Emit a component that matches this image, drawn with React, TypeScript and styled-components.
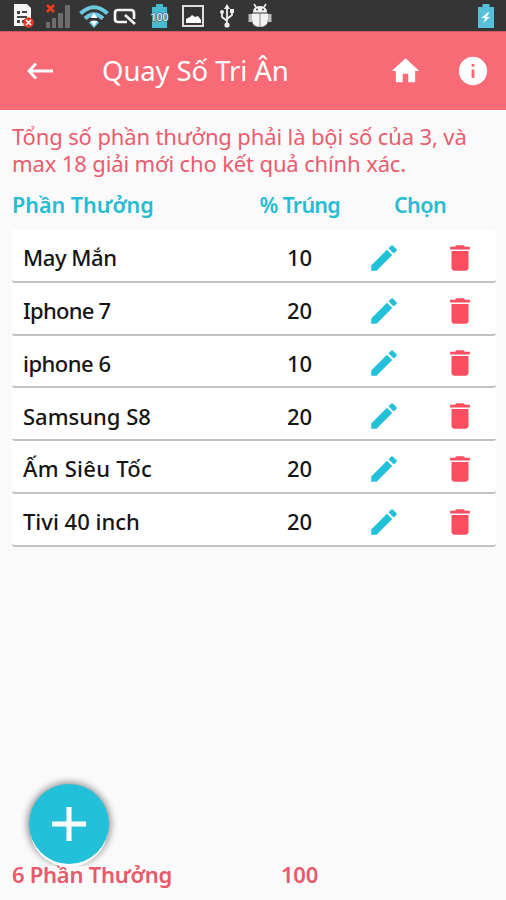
import React from "react";
import styled, { createGlobalStyle } from "styled-components";

const colors = {
  coral: "#f96a77",
  red: "#e8596a",
  notice: "#ea5c6e",
  trash: "#fb4f61",
  cyan: "#22c0d9",
  heading: "#27bcd2",
  page: "#fafafa",
  status: "#353535",
};

const GlobalStyle = createGlobalStyle`
  * { box-sizing: border-box; }
  body {
    margin: 0;
    background: ${colors.page};
    font-family: "Noto Sans", "Open Sans", sans-serif;
  }
`;

const Screen = styled.div`
  width: 506px;
  height: 900px;
  display: flex;
  flex-direction: column;
  overflow: hidden;
  background: ${colors.page};
`;

const StatusBar = styled.div`
  height: 31px;
  flex: none;
  display: flex;
  align-items: center;
  padding: 1px 11px 0 13px;
  background: ${colors.status};
`;

const StatusIcon = styled.svg<{ $gap?: number }>`
  display: block;
  flex: none;
  margin-right: ${(p) => p.$gap ?? 0}px;
`;

const Spacer = styled.div`
  flex: 1;
`;

const AppBar = styled.header`
  height: 79px;
  flex: none;
  display: flex;
  align-items: center;
  padding: 0 16px 0 26px;
  background: ${colors.coral};
  border-top: 1px solid #cf5a66;
`;

const Title = styled.h1`
  flex: 1;
  margin: 0 0 0 48px;
  color: #fff;
  font-size: 27.5px;
  font-weight: 400;
  line-height: 40px;
  letter-spacing: -0.1px;
  white-space: nowrap;
`;

const BarIcon = styled.svg<{ $left?: number }>`
  display: block;
  flex: none;
  margin-left: ${(p) => p.$left ?? 0}px;
  fill: #fff;
`;

const Notice = styled.p`
  margin: 13px 0 0 12px;
  color: ${colors.notice};
  font-size: 22px;
  line-height: 26.5px;
`;

const NoticeLine = styled.span`
  display: block;
  white-space: nowrap;
  letter-spacing: -0.13px;
`;

const HeadRow = styled.div`
  display: grid;
  grid-template-columns: 247.5px 134.5px 1fr;
  height: 30px;
  margin: 14px 0 10px 12px;
  color: ${colors.heading};
  font-size: 21.5px;
  font-weight: 600;
  line-height: 30px;
  white-space: nowrap;
`;

const HeadCell = styled.span<{ $spacing: number }>`
  letter-spacing: ${(p) => p.$spacing}px;
`;

const List = styled.div`
  width: 484px;
  margin-left: 12px;
`;

const PrizeRow = styled.div`
  display: grid;
  grid-template-columns: 248px 80px 76px 1fr;
  align-items: center;
  height: 52.75px;
  padding: 0 0 0 11px;
  background: #fff;
  border-bottom: 2.5px solid #c2c2c2;
  border-radius: 3px;
`;

const PrizeName = styled.span<{ $spacing: number }>`
  color: #151515;
  font-size: 22px;
  font-weight: 500;
  line-height: 30px;
  padding-top: 4px;
  white-space: nowrap;
  letter-spacing: ${(p) => p.$spacing}px;
`;

const Percent = styled.span`
  color: #151515;
  width: 57px;
  text-align: center;
  font-size: 22px;
  font-weight: 550;
  line-height: 30px;
  padding-top: 4px;
`;

const ActionIcon = styled.svg<{ $color: string }>`
  display: block;
  margin: 5px 0 0 16px;
  fill: ${(p) => p.$color};
`;

const Footer = styled.footer`
  display: grid;
  grid-template-columns: 269px 1fr;
  position: relative;
  margin: auto 0 11px 12px;
  color: ${colors.red};
  font-size: 22px;
  font-weight: 600;
  line-height: 30px;
  white-space: nowrap;
`;

const FooterText = styled.span`
  position: relative;
  z-index: 1;
  letter-spacing: -0.25px;
`;

const AddButton = styled.button`
  position: absolute;
  left: 17px;
  bottom: 25px;
  width: 80px;
  height: 80px;
  padding: 0;
  border: 0;
  border-radius: 50%;
  display: grid;
  place-items: center;
  background: ${colors.cyan};
  box-shadow: 0 4px 0 -1px #fff, 0 0 7px 2px rgba(0, 0, 0, 0.42);
  clip-path: inset(-16px -16px -2px -16px);
`;

const prizes = [
  { name: "May Mắn", percent: 10, spacing: -0.45 },
  { name: "Iphone 7", percent: 20, spacing: -0.75 },
  { name: "iphone 6", percent: 10, spacing: -0.5 },
  { name: "Samsung S8", percent: 20, spacing: 0 },
  { name: "Ấm Siêu Tốc", percent: 20, spacing: 0.25 },
  { name: "Tivi 40 inch", percent: 20, spacing: 0 },
];

function StatusIcons() {
  return (
    <StatusBar>
      <StatusIcon $gap={11} width="22" height="26" viewBox="0 0 22 26">
        <path d="M1 1h13l4 4v18H1z" fill="#f5f5f5" />
        <path d="M4 8h3v3H4zM9 8h5v2H9zM4 13h10v2H4zM4 17h3v3H4zM9 17h3v3H9z" fill="#444" />
        <circle cx="15.500" cy="19.500" r="5.300" fill="#e13b27" />
        <path d="M13 17l5 5m0-5l-5 5" stroke="#fff" strokeWidth="1.600" />
      </StatusIcon>
      <StatusIcon $gap={8} width="25" height="26" viewBox="0 0 25 26">
        <path d="M0 19h4v6H0zM6 15h4v10H6zM12 10h5v15h-5zM19 2h5v23h-5z" fill="#6c6c6c" />
        <path d="M1 2l7 7m0-7l-7 7" stroke="#ee3d1d" strokeWidth="2.600" />
      </StatusIcon>
      <StatusIcon $gap={4} width="30" height="26" viewBox="0 0 30 26">
        <path d="M1.500 10.500Q15-2 28.500 10.500M6 15.500q9-8.500 18 0" fill="none" stroke="#6bc8df" strokeWidth="4" />
        <path d="M10 19.500q5-4.500 10 0L15 25z" fill="#6bc8df" />
        <path d="M15 10l3.500 5h-7zM15 23l-3.500-5h7z" fill="#fff" />
      </StatusIcon>
      <StatusIcon $gap={13} width="24" height="26" viewBox="0 0 24 26">
        <path d="M14 20H5q-3 0-3-3v-6q0-3 3-3h13q3 0 3 3v6M12 13l10 9" transform="translate(0 -1)" fill="none" stroke="#f4f4f4" strokeWidth="2.700" />
      </StatusIcon>
      <StatusIcon $gap={13} width="19" height="26" viewBox="0 0 19 26">
        <path d="M6 1h7v3h4v21H2V4h4z" fill="#49b9d0" />
        <text x="9.500" y="17.500" textAnchor="middle" fontFamily="Roboto" fontSize="10.500" fontWeight="500" fill="#eef" stroke="#28616d" strokeWidth="1.200" paintOrder="stroke">100</text>
      </StatusIcon>
      <StatusIcon $gap={16} width="22" height="26" viewBox="0 0 22 26">
        <rect x="1" y="3" width="20" height="20" fill="none" stroke="#ddd" strokeWidth="2" />
        <path d="M4 20v-4l4-2 2-2 3 2 3-1 3 4v3z" fill="#fff" />
      </StatusIcon>
      <StatusIcon $gap={14} width="14" height="26" viewBox="0 0 14 26">
        <path d="M7 4v17M7 18l-5-4V8M7 16l5-4V8" fill="none" stroke="#eee" strokeWidth="1.800" />
        <path d="M7 1l3 5H4zM10 6h4v4h-4z" fill="#eee" />
        <circle cx="2" cy="9" r="2" fill="#eee" />
        <circle cx="7" cy="22" r="2.600" fill="#eee" />
      </StatusIcon>
      <StatusIcon width="24" height="26" viewBox="0 0 24 26">
        <path d="M5 9.500q0-6.500 7-6.500t7 6.500z" fill="#f2f2f2" />
        <path d="M8 4L6 1M16 4l2-3" stroke="#f2f2f2" strokeWidth="1.600" />
        <path d="M4 10.500h16V16q0 8-8 8t-8-8z" fill="#f2f2f2" />
        <path d="M.5 11H4v8H.5zM20 11h3.500v8H20z" fill="#bbb" />
        <path d="M12 10.500V24" stroke="#888" strokeWidth="1" />
        <circle cx="9" cy="6.500" r="1" fill="#444" />
        <circle cx="15" cy="6.500" r="1" fill="#444" />
      </StatusIcon>
      <Spacer />
      <StatusIcon width="18" height="26" viewBox="0 0 18 26">
        <path d="M5.500 1h7v3H17v21H1V4h4.500z" fill="#58bfd9" />
        <path d="M10.500 9.500l-6 5.500h4L6 20l7-6H9.500l3-4.500z" fill="#fff" />
      </StatusIcon>
    </StatusBar>
  );
}

export default function App() {
  return (
    <>
      <GlobalStyle />
      <Screen>
        <StatusIcons />
        <AppBar>
          <BarIcon width="28" height="20" viewBox="0 0 28 20">
            <path d="M10 2.500L3 10l7 7.500M3 10h24" fill="none" stroke="#fff" strokeWidth="2.800" />
          </BarIcon>
          <Title>Quay Số Tri Ân</Title>
          <BarIcon width="33" height="34" viewBox="0 0 24 24" preserveAspectRatio="none">
            <path d="M10 20v-6h4v6h5v-8h3L12 3 2 12h3v8z" />
          </BarIcon>
          <BarIcon $left={34} width="34" height="34" viewBox="0 0 24 24">
            <path d="M12 2C6.480 2 2 6.480 2 12s4.480 10 10 10 10-4.480 10-10S17.520 2 12 2zm1 15h-2v-6h2v6zm0-8h-2V7h2v2z" />
          </BarIcon>
        </AppBar>
        <Notice>
          <NoticeLine>Tổng số phần thưởng phải là bội số của 3, và</NoticeLine>
          <NoticeLine>max 18 giải mới cho kết quả chính xác.</NoticeLine>
        </Notice>
        <HeadRow>
          <HeadCell $spacing={0}>Phần Thưởng</HeadCell>
          <HeadCell $spacing={-0.75}>% Trúng</HeadCell>
          <HeadCell $spacing={-0.6}>Chọn</HeadCell>
        </HeadRow>
        <List>
          {prizes.map((p) => (
            <PrizeRow key={p.name}>
              <PrizeName $spacing={p.spacing}>{p.name}</PrizeName>
              <Percent>{p.percent}</Percent>
              <ActionIcon $color={colors.cyan} width="34" height="34" viewBox="0 0 24 24">
                <path d="M3 17.250V21h3.750L17.810 9.940l-3.750-3.750L3 17.250zM20.710 7.040a1 1 0 0 0 0-1.410l-2.340-2.340a1 1 0 0 0-1.410 0l-1.830 1.830 3.750 3.750 1.830-1.830z" />
              </ActionIcon>
              <ActionIcon $color={colors.trash} width="34" height="34" viewBox="0 0 24 24">
                <path d="M6 19c0 1.100.9 2 2 2h8c1.100 0 2-.9 2-2V7H6v12zM19 4h-3.500l-1-1h-5l-1 1H5v2h14V4z" />
              </ActionIcon>
            </PrizeRow>
          ))}
        </List>
        <Footer>
          <FooterText>6 Phần Thưởng</FooterText>
          <FooterText>100</FooterText>
          <AddButton aria-label="+">
            <svg width="36" height="36" viewBox="0 0 36 36">
              <path d="M18 1v34M1 18h34" stroke="#fff" strokeWidth="5" />
            </svg>
          </AddButton>
        </Footer>
      </Screen>
    </>
  );
}
